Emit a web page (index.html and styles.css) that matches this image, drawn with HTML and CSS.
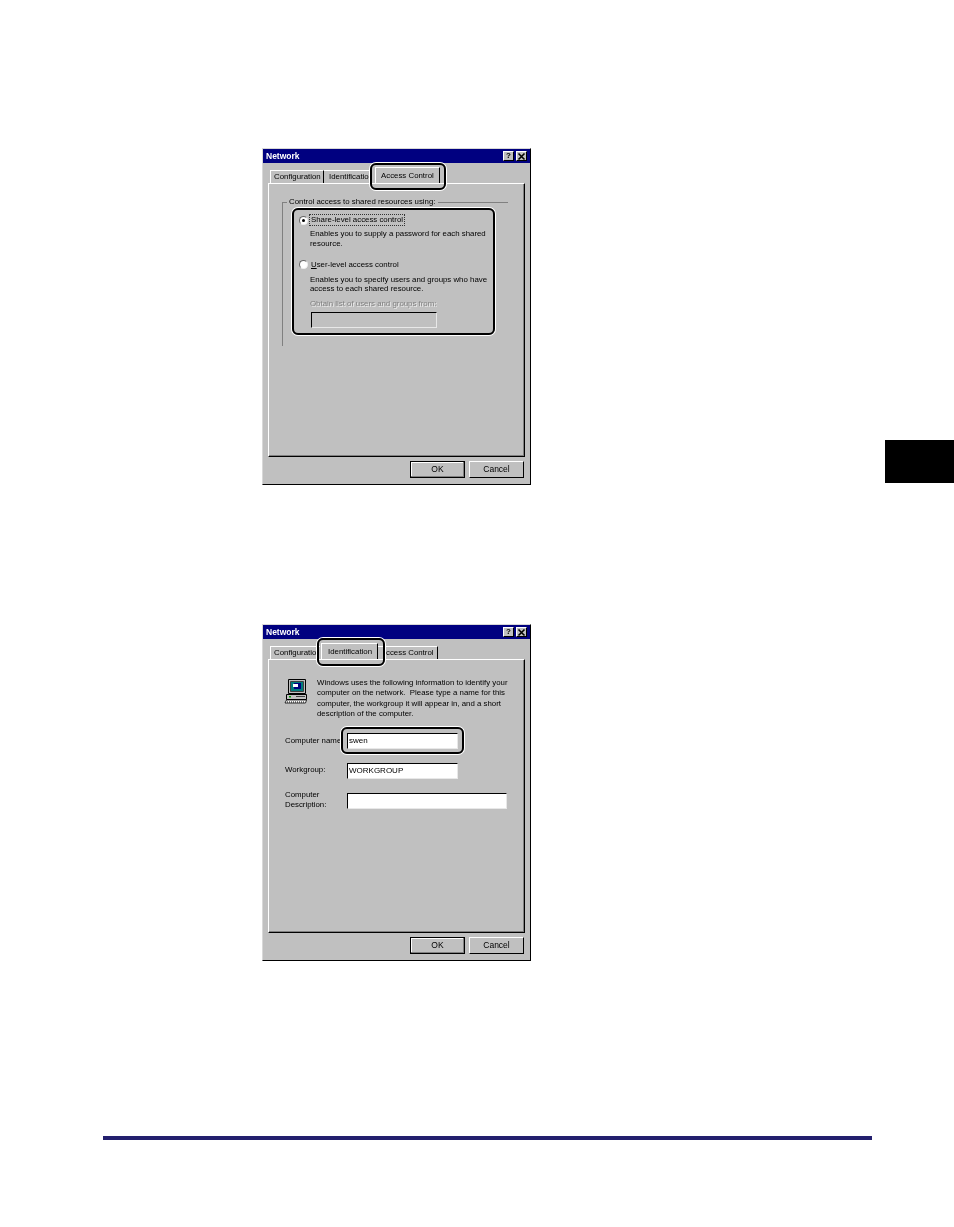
FILE: index.html
```html
<!DOCTYPE html>
<html lang="en">
<head>
<meta charset="utf-8">
<title>Network</title>
<link rel="stylesheet" href="styles.css">
</head>
<body>
<div class="page">
  <main class="main">
    <section class="dialog dialog-first">
      <div class="titlebar">
        <span class="title">Network</span>
        <span class="tbtn tbtn-help">?</span>
        <span class="tbtn tbtn-close"><svg viewBox="0 0 9 9" width="9" height="9"><path d="M1.5 1.5 7.5 7.5M7.5 1.5 1.5 7.5" stroke="#000" stroke-width="1.6" fill="none"/></svg></span>
      </div>
      <div class="tabs">
        <div class="tab tab-conf-a">Configuration</div>
        <div class="tab tab-id-a">Identificatio</div>
        <div class="tab tab-active tab-ac-a">Access Control</div>
      </div>
      <div class="panel">
        <div class="group">
          <div class="legend">Control access to shared resources using:</div>
          <div class="option option-share">
            <span class="radio radio-on"></span>
            <span class="focus">Share-level access control</span>
          </div>
          <p class="desc desc-share">Enables you to supply a password for each shared<br>resource.</p>
          <div class="option option-user">
            <span class="radio"></span>
            <span class="plain"><u>U</u>ser-level access control</span>
          </div>
          <p class="desc desc-user">Enables you to specify users and groups who have<br>access to each shared resource.</p>
          <p class="disabled"><span>Obtain list of users and groups from:</span></p>
          <div class="field field-disabled"></div>
        </div>
      </div>
      <div class="buttons">
        <div class="btn btn-default">OK</div>
        <div class="btn">Cancel</div>
      </div>
      <div class="callout callout-tab-a"></div>
      <div class="callout callout-options"></div>
    </section>

    <section class="dialog dialog-second">
      <div class="titlebar">
        <span class="title">Network</span>
        <span class="tbtn tbtn-help">?</span>
        <span class="tbtn tbtn-close"><svg viewBox="0 0 9 9" width="9" height="9"><path d="M1.5 1.5 7.5 7.5M7.5 1.5 1.5 7.5" stroke="#000" stroke-width="1.6" fill="none"/></svg></span>
      </div>
      <div class="tabs">
        <div class="tab tab-conf-b">Configuratio</div>
        <div class="tab tab-active tab-id-b">Identification</div>
        <div class="tab tab-ac-b">ccess Control</div>
      </div>
      <div class="panel">
        <div class="intro">
          <svg class="pc" viewBox="0 0 24 26" width="24" height="26">
            <path d="M4.500 1.500h17v14h-17z" fill="#c0c0c0" stroke="#000"/>
            <path d="M6.500 3.500h13v10h-13z" fill="#007b7b" stroke="#404040"/>
            <path d="M10 5h7v6h-7z" fill="#000080"/>
            <path d="M9 6h5v3H9z" fill="#fff"/>
            <path d="M2.500 16.500h20v5h-20z" fill="#c0c0c0" stroke="#000"/>
            <path d="M5 18h2v1.500H5z" fill="#00a000"/>
            <path d="M12 18h9v1H12z" fill="#404040"/>
            <path d="M1 25 2.500 22h20l-1 3z" fill="#fff" stroke="#000" stroke-width=".8"/>
            <path d="M3 24h17" stroke="#000" stroke-dasharray="1 1"/>
          </svg>
          <p class="intro-text">Windows uses the following information to identify your<br>computer on the network.  Please type a name for this<br>computer, the workgroup it will appear in, and a short<br>description of the computer.</p>
        </div>
        <div class="row row-name">
          <span class="label">Computer name:</span>
          <div class="field field-short">swen</div>
        </div>
        <div class="row row-work">
          <span class="label">Workgroup:</span>
          <div class="field field-short">WORKGROUP</div>
        </div>
        <div class="row row-desc">
          <span class="label">Computer<br>Description:</span>
          <div class="field field-long"></div>
        </div>
      </div>
      <div class="buttons">
        <div class="btn btn-default">OK</div>
        <div class="btn">Cancel</div>
      </div>
      <div class="callout callout-tab-b"></div>
      <div class="callout callout-name"></div>
    </section>

    <div class="rule"></div>
  </main>
  <aside class="side"><div class="side-tab"></div></aside>
</div>
</body>
</html>
```
FILE: styles.css
```css
html, body {
  margin: 0;
  padding: 0;
  background: #fff;
}
.page {
  display: grid;
  grid-template-columns: 885px 69px;
  width: 954px;
  height: 1227px;
  overflow: hidden;
}
.main {
  padding-top: 148px;
}
.side {
  padding-top: 440px;
}
.side-tab {
  height: 43px;
  background: #000;
}
.rule {
  width: 769px;
  height: 4px;
  margin: 175px 0 0 103px;
  background: #231f6e;
}

/* dialog */
.dialog {
  position: relative;
  box-sizing: border-box;
  width: 269px;
  height: 337px;
  margin-left: 262px;
  background: #c0c0c0;
  border: 1px solid;
  border-color: #d8d8d8 #000 #000 #d8d8d8;
  font: 7.850px/10px "Liberation Sans", Arial, sans-serif;
  color: #000;
}
.dialog-second {
  margin-top: 139px;
}
.dialog > :not(.callout) {
  filter: blur(.25px);
}
.titlebar {
  display: flex;
  align-items: center;
  height: 14px;
  padding: 0 3px;
  background: #000080;
}
.title {
  flex: 1;
  color: #fff;
  font-weight: 700;
  font-size: 8.500px;
}
.tbtn {
  display: flex;
  align-items: center;
  justify-content: center;
  box-sizing: border-box;
  width: 11px;
  height: 10px;
  background: #c0c0c0;
  border: 1px solid;
  border-color: #fff #000 #000 #fff;
  color: #000;
  font-weight: 700;
  font-size: 8px;
}
.tbtn-help {
  margin-right: 2px;
}
.tbtn-close svg {
  display: block;
  flex: none;
}

/* tabs */
.tabs {
  display: flex;
  align-items: flex-end;
  height: 20px;
  padding-left: 7px;
}
.tab {
  box-sizing: border-box;
  height: 13px;
  white-space: nowrap;
  padding: 1px 0 0 3px;
  border-top: 1px solid #fff;
  border-right: 1px solid #000;
  text-align: left;
}
.tab-conf-a {
  width: 54px;
  border-left: 1px solid #fff;
}
.tab-id-a {
  width: 47px;
  padding-left: 5px;
  border-right: 0;
}
.tab-active {
  position: relative;
  z-index: 1;
  height: 17px;
  margin-bottom: -1px;
  padding-top: 3px;
  background: #c0c0c0;
  border-left: 1px solid #fff;
}
.tab-ac-a {
  width: 65px;
  margin-left: 4px;
  padding-left: 5px;
}
.tab-conf-b {
  width: 50px;
  border-left: 1px solid #fff;
  border-right: 0;
}
.tab-id-b {
  width: 57px;
  margin-left: 1px;
  padding-left: 6px;
}
.tab-ac-b {
  width: 60px;
  padding: 1px 0 0 8px;
}

/* panel */
.panel {
  position: relative;
  box-sizing: border-box;
  width: 257px;
  height: 274px;
  margin-left: 5px;
  border: 1px solid;
  border-color: #fff #000 #000 #fff;
  box-shadow: inset -1px -1px 0 #808080;
}

/* group box */
.group {
  box-sizing: border-box;
  width: 226px;
  height: 144px;
  margin: 18px 0 0 13px;
  border-top: 1px solid #808080;
  border-left: 1px solid #808080;
}
.legend {
  display: table;
  margin: -6px 0 0 4px;
  padding: 0 2px;
  background: #c0c0c0;
}
.option {
  display: flex;
  align-items: center;
  height: 12px;
  margin-left: 16px;
}
.option-share {
  margin-top: 7px;
}
.option-user {
  margin-top: 10.500px;
}
.radio {
  box-sizing: border-box;
  flex: none;
  position: relative;
  width: 9px;
  height: 9px;
  border-radius: 50%;
  background: #fff;
  border: 1px solid;
  border-color: #666 #eee #eee #666;
}
.radio-on::after {
  content: "";
  display: block;
  width: 3px;
  height: 3px;
  margin: 2px;
  border-radius: 50%;
  background: #000;
}
.focus {
  margin-left: 2px;
  padding: 0 1px;
  outline: 1px dotted #333;
  outline-offset: 0;
  white-space: nowrap;
}
.plain {
  margin-left: 3px;
  white-space: nowrap;
}
.desc {
  margin: 3px 0 0 27px;
  line-height: 9.500px;
}
.desc-user {
  margin-top: 4px;
}
.disabled {
  margin: 5.500px 0 0 27px;
  color: #808080;
  text-shadow: 1px 1px 0 #eee;
}
.disabled span {
  white-space: nowrap;
}
.field {
  box-sizing: border-box;
  height: 16px;
  padding: 2px 0 0 1px;
  background: #fff;
  border: 1px solid;
  border-color: #000 #e8e8e8 #e8e8e8 #000;
  font-size: 8px;
}
.field-disabled {
  width: 126px;
  margin: 3px 0 0 28px;
  background: #c0c0c0;
}
.field-short {
  width: 111px;
}
.field-long {
  width: 160px;
}

/* identification */
.intro {
  display: flex;
  padding: 18px 0 0 15px;
}
.pc {
  flex: none;
  display: block;
}
.intro-text {
  margin: 0 0 0 9px;
  white-space: pre;
  line-height: 10.300px;
}
.row {
  display: flex;
  align-items: flex-start;
}
.row-name {
  margin-top: 14px;
}
.row-name .label {
  margin-top: 3px;
}
.row-work {
  margin-top: 14px;
}
.row-desc {
  margin-top: 14px;
}
.label {
  width: 62px;
  margin: 2px 0 0 16px;
  white-space: nowrap;
}
.row-desc .label {
  margin-top: -3px;
}

/* buttons */
.buttons {
  display: flex;
  gap: 4px;
  margin: 4px 0 0 147px;
  font-size: 8.500px;
}
.btn {
  box-sizing: border-box;
  width: 55px;
  height: 17px;
  background: #c0c0c0;
  border: 1px solid;
  border-color: #fff #000 #000 #fff;
  text-align: center;
  line-height: 14px;
}
.btn-default {
  border-color: #000;
  box-shadow: inset -1px -1px 0 #808080, inset 1px 1px 0 #fff;
}

/* callouts */
.callout {
  position: absolute;
  box-sizing: border-box;
  border: 2px solid #000;
  border-radius: 6px;
  box-shadow: 0 0 0 1px #fff;
}
.callout-tab-a {
  left: 107px;
  top: 14px;
  width: 76px;
  height: 27px;
}
.callout-options {
  left: 29px;
  top: 59px;
  width: 203px;
  height: 127px;
}
.callout-tab-b {
  left: 54px;
  top: 13px;
  width: 68px;
  height: 28px;
}
.callout-name {
  left: 78px;
  top: 102px;
  width: 123px;
  height: 27px;
}
```
